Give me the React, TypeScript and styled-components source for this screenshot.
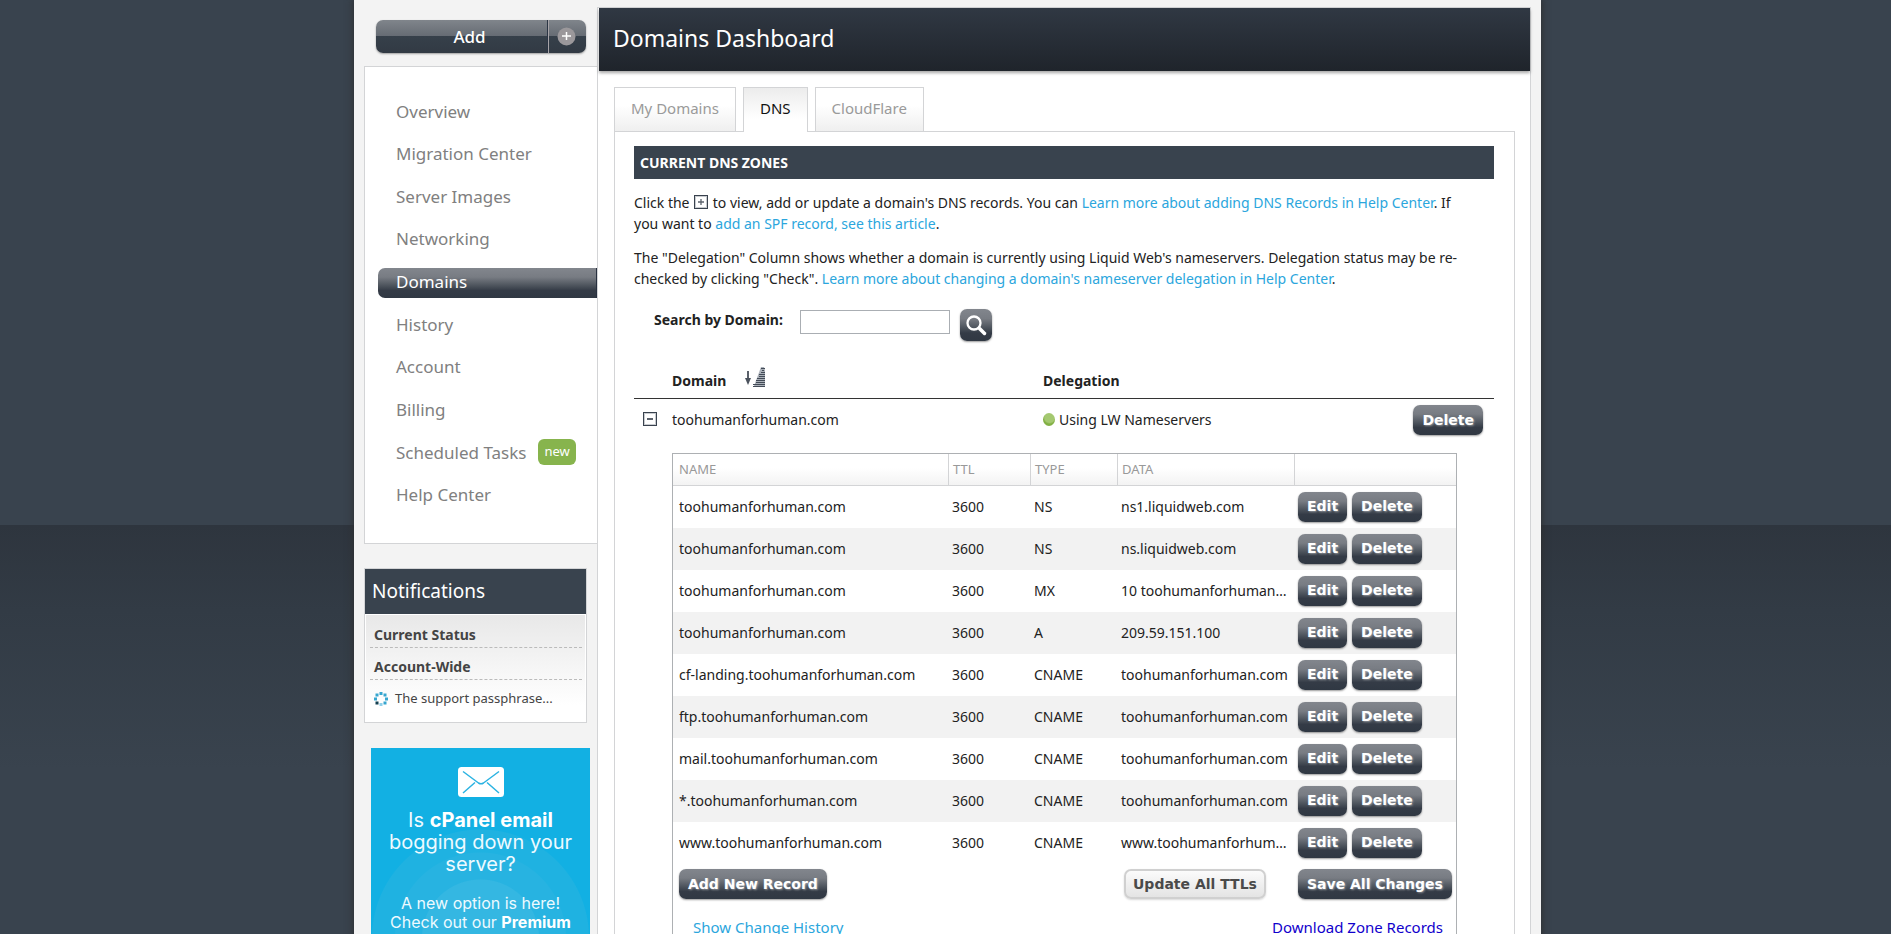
import React from "react";
import styled, { createGlobalStyle, css } from "styled-components";

const slate = "#39434e";
const line = "#d3d4d6";
const steel = "linear-gradient(#82868d 0%, #787c83 30%, #4b525b 60%, #343b46 75%, #303843 100%)";

const GlobalStyle = createGlobalStyle`
  *, *::before, *::after { box-sizing: border-box; }
  html { scrollbar-width: none; }
  body {
    margin: 0;
    padding-left: 4px;
    background: linear-gradient(#2e353e, #323b45 35%, ${slate}) 0 525px / 100% 245px no-repeat ${slate};
    font: 14px/21px "Noto Sans", "Open Sans", sans-serif;
    color: #222;
  }
  a { color: #2ba6dd; text-decoration: none; }
  button { cursor: pointer; }
`;

const Shell = styled.div`
  display: flex;
  align-items: stretch;
  max-width: 1187px;
  min-height: 100vh;
  margin: 0 auto;
  padding-right: 10px;
  background: #f3f3f3;
  box-shadow: 0 0 7px 1px rgba(45, 45, 45, 0.9);
`;

const Sidebar = styled.aside`
  flex: none;
  width: 243px;
  padding: 20px 0 0 10px;
`;

const AddGroup = styled.div`
  display: flex;
  height: 33px;
  margin: 0 11px 13px 12px;
  border-radius: 7px;
  overflow: hidden;
  box-shadow: 0 1px 2px rgba(0, 0, 0, 0.35);
`;

const AddButton = styled.button<{ $icon?: boolean }>`
  display: flex;
  align-items: center;
  justify-content: center;
  border: 0;
  padding: 0 0 1px;
  color: #fff;
  font: 500 17px/21px "Noto Sans", sans-serif;
  background: linear-gradient(#80858b 0, #666c74 48%, #36404a 49%, #323a44 100%);
  ${(p) =>
    p.$icon
      ? css`
          width: 38px;
          padding-right: 3px;
          border-left: 1px solid #a7a4a8;
        `
      : css`
          flex: 1;
          padding-left: 16px;
          border-right: 1px solid #2b3544;
        `}
`;

const Nav = styled.nav`
  padding: 30px 0 32px 13px;
  background: #fff;
  border: 1px solid ${line};
  border-right: 0;
`;

const NavList = styled.ul`
  display: flex;
  flex-direction: column;
  justify-content: space-between;
  min-height: 414px;
  margin: 0;
  padding: 0;
  list-style: none;
`;

const NavLink = styled.a<{ $active?: boolean }>`
  display: flex;
  align-items: center;
  gap: 12px;
  height: 30px;
  padding: 0 0 2px 18px;
  font-size: 17px;
  color: #808080;
  border-radius: 7px 0 0 7px;
  ${(p) =>
    p.$active &&
    css`
      color: #fff;
      background: ${steel};
      border-right: 1px solid #27303f;
    `}
`;

const NewBadge = styled.span`
  padding: 2px 6px 3px;
  border-radius: 6px;
  background: #87b44d;
  color: #fff;
  font-size: 13px;
`;

const Notifications = styled.section`
  margin: 24px 10px 25px 0;
  background: #fff;
  border: 1px solid ${line};
`;

const NotifTitle = styled.h2`
  margin: 0;
  padding: 12px 7px;
  background: ${slate};
  color: #fff;
  font-size: 19px;
  font-weight: 400;
  line-height: 21px;
`;

const NotifBody = styled.div`
  margin: 1px;
  padding: 9px 3px 12px 4px;
  background: linear-gradient(#e8e8e8, #fff 85%);
`;

const NotifHead = styled.h3`
  margin: 0 0 8px;
  padding: 0 4px 2px;
  border-bottom: 1px dashed #bbb;
  color: #444;
  font-size: 14px;
  line-height: 21px;
`;

const NotifItem = styled.div`
  display: flex;
  align-items: center;
  gap: 7px;
  padding: 0 4px;
  font-size: 13px;
  color: #444;
`;

const Banner = styled.a`
  display: block;
  margin: 0 7px;
  padding: 19px 10px 10px;
  text-align: center;
  color: #eefaff;
  font-family: Inter, "Noto Sans", sans-serif;
  background: radial-gradient(circle at 50% 190px, #34b7e2 0 58px, #27b3e1 59px 85px, #1fb2e1 86px 108px, #12b0e3 109px);
  svg { display: block; margin: 0 auto 12px; }
  b { color: #fff; }
`;

const BannerLead = styled.p`
  margin: 0 0 19px;
  font-size: 20px;
  line-height: 22px;
`;

const BannerText = styled.p`
  margin: 0;
  font-size: 16px;
  line-height: 19px;
`;

const Main = styled.main`
  flex: 1;
  min-width: 0;
  margin-top: 7px;
  background: #fff;
  border: 1px solid ${line};
  border-bottom: 0;
`;

const PageHeader = styled.header`
  margin-left: 1px;
  padding: 16px 14px 19px;
  background: linear-gradient(#303843, #1f242b);
  box-shadow: 0 2px 3px rgba(0, 0, 0, 0.35);
  h1 {
    margin: 0;
    color: #fff;
    font-size: 23px;
    font-weight: 400;
    line-height: 28px;
  }
`;

const Tabs = styled.div`
  display: flex;
  gap: 7px;
  margin: 16px 16px 0;
`;

const Tab = styled.a<{ $active?: boolean }>`
  height: 44px;
  padding: 10px 16px;
  border: 1px solid ${line};
  border-bottom: 0;
  font-size: 15px;
  color: ${(p) => (p.$active ? "#111" : "#9a9a9a")};
  background: ${(p) => (p.$active ? "linear-gradient(#ececec, #fff 70%)" : "linear-gradient(#fff 40%, #efefef)")};
  ${(p) =>
    p.$active &&
    css`
      height: 45px;
      margin-bottom: -1px;
      z-index: 1;
    `}
`;

const Panel = styled.section`
  margin: 0 15px 0 16px;
  padding: 14px 20px 0 19px;
  border: 1px solid ${line};
  border-bottom: 0;
`;

const SectionTitle = styled.h2`
  margin: 0 0 13px;
  padding: 6px;
  background: ${slate};
  color: #fff;
  font-size: 14px;
  line-height: 21px;
`;

const Copy = styled.p`
  margin: 0 0 13px;
  padding-right: 20px;
  svg { margin: 0 1px; vertical-align: -1px; }
`;

const SearchForm = styled.form`
  display: flex;
  align-items: flex-start;
  margin-top: 20px;
  padding-left: 20px;
  label {
    width: 146px;
    font-weight: 700;
  }
  input {
    width: 150px;
    height: 24px;
    margin: 1px 10px 0 0;
    border: 1px solid #aaaeb3;
    padding: 0 4px;
    font: inherit;
  }
`;

const SearchButton = styled.button`
  display: flex;
  align-items: center;
  justify-content: center;
  width: 32px;
  height: 32px;
  padding: 0;
  border: 0;
  border-radius: 7px;
  background: ${steel};
  box-shadow: 0 1px 2px rgba(0, 0, 0, 0.4);
`;

const ZoneTable = styled.table`
  width: 100%;
  table-layout: fixed;
  border-spacing: 0;
  text-align: left;
`;

const ZoneHead = styled.th`
  height: 58px;
  padding: 0 0 7px;
  vertical-align: bottom;
  border-bottom: 1px solid #333;
  svg { margin-left: 19px; vertical-align: -1px; }
`;

const ZoneCell = styled.td<{ $end?: boolean }>`
  height: 54px;
  padding: ${(p) => (p.$end ? "6px 11px 0 0" : "10px 0 0")};
  vertical-align: top;
  text-align: ${(p) => (p.$end ? "right" : "left")};
`;

const Toggle = styled.button`
  display: block;
  margin: 3px 0 0 9px;
  padding: 0;
  border: 0;
  background: none;
  svg { display: block; }
`;

const StatusDot = styled.span`
  display: inline-block;
  width: 12px;
  height: 13px;
  margin-right: 4px;
  vertical-align: -1px;
  border-radius: 50%;
  background: radial-gradient(circle at 55% 35%, #a4c870 0 45%, #82b044 60%);
`;

const RecordsCell = styled.td`
  padding: 0 37px 0 38px;
`;

const Records = styled.table`
  width: 100%;
  table-layout: fixed;
  border-spacing: 0;
  border: 1px solid #adb0b3;
  border-bottom: 0;
`;

const RecordHead = styled.th`
  height: 32px;
  padding: 0 4px;
  border-bottom: 1px solid ${line};
  background: linear-gradient(#fff 45%, #f3f3f3);
  color: #999;
  font-size: 13px;
  font-weight: 400;
  text-align: left;
  &:first-child { padding-left: 6px; }
  & + & { border-left: 1px solid ${line}; }
`;

const RecordRow = styled.tr`
  &:nth-child(even) { background: #f2f2f2; }
`;

const RecordCell = styled.td`
  height: 42px;
  padding: 0 4px 2px;
  overflow: hidden;
  white-space: nowrap;
  text-overflow: ellipsis;
  &:first-child { padding-left: 6px; }
`;

const ButtonRow = styled.div`
  display: flex;
  gap: 5px;
  padding-top: 1px;
`;

const ActionButton = styled.button<{ $light?: boolean }>`
  height: 30px;
  padding: 0 9px;
  border: 0;
  border-radius: 7px;
  font: 700 14px/21px "DejaVu Sans", sans-serif;
  color: #fff;
  text-shadow: 1px 1px 2px rgba(255, 255, 255, 0.4);
  background: ${steel};
  box-shadow: 0 1px 2px rgba(0, 0, 0, 0.4);
  white-space: nowrap;
  ${(p) =>
    p.$light &&
    css`
      margin-left: 3px;
      padding: 0 7px;
      border: 2px solid #d0d0d0;
      color: #4a4a4a;
      text-shadow: none;
      background: linear-gradient(#fbfbfb, #e4e4e4);
      box-shadow: 0 1px 2px rgba(0, 0, 0, 0.15);
    `}
`;

const FooterCell = styled.td<{ $end?: boolean }>`
  padding: ${(p) => (p.$end ? "11px 13px 9px 0" : "11px 20px 9px")};
  text-align: ${(p) => (p.$end ? "right" : "left")};
`;

const HistoryLink = styled.a`
  font-size: 15px;
`;

const DownloadLink = styled.a`
  && { color: #1100cc; }
  font-size: 15px;
`;

const BoxIcon = ({ plus }: { plus?: boolean }) => (
  <svg width="14" height="14" viewBox="0 0 14 14" aria-hidden="true">
    <rect x="0.5" y="0.5" width="13" height="13" fill="#fff" stroke="#39424e" />
    <rect x="1.5" y="1.5" width="11" height="11" fill="none" stroke="#c9ccd0" />
    <path d={plus ? "M4 7h6M7 4v6" : "M4 7h6"} stroke="#5b626c" strokeWidth={plus ? 1.3 : 2} />
  </svg>
);

const SortIcon = () => (
  <svg width="21" height="20" viewBox="0 0 21 20" aria-hidden="true">
    <path d="M3 4v9" stroke="#5b616b" strokeWidth="2" />
    <path d="M0 11h6L3 18z" fill="#4b525d" />
    <path d="M16 0h3l1 3v16H9z" fill="#aab0b8" />
    <path
      d="M16 1.500h4M17 3.500h2M16 5.500h4M14 7.500h6M14 9.500h6M12 11.500h8M11 13.500h9M11 15.500h9M8 17.500h12M8 19.500h12"
      stroke="#434b57"
      strokeWidth="1"
    />
  </svg>
);

const SpinnerIcon = () => (
  <svg width="14" height="14" viewBox="0 0 14 14" fill="#37a6cf" aria-hidden="true">
    <rect x="5.500" y="0" width="3" height="3" />
    <rect x="1.500" y="1.500" width="3" height="3" />
    <rect x="9.500" y="1.500" width="3" height="3" />
    <rect x="0" y="5.500" width="3" height="3" />
    <rect x="11" y="5.500" width="3" height="3" />
    <rect x="1.500" y="9.500" width="3" height="3" fill="#123f50" />
    <rect x="9.500" y="9.500" width="3" height="3" />
    <rect x="5.500" y="11" width="3" height="3" fill="#8fd0ea" />
  </svg>
);

const MailIcon = () => (
  <svg width="46" height="30" viewBox="0 0 46 30" fill="none" aria-hidden="true">
    <rect width="46" height="30" rx="3.500" fill="#fff" />
    <path d="M5 4.500 20.500 16q2.500 1.600 5 0L41 4.500M5 26l12-10.500M41 26 29 15.500" stroke="#2bb3e2" strokeWidth="1.500" />
  </svg>
);

const SearchIcon = () => (
  <svg width="21" height="21" viewBox="0 0 21 21" fill="none" stroke="#fff" strokeLinecap="round" aria-hidden="true">
    <circle cx="8" cy="8" r="6.500" strokeWidth="2.300" />
    <path d="M13.500 13.500l5 5" strokeWidth="3.500" />
  </svg>
);

const AddIcon = () => (
  <svg width="19" height="19" viewBox="0 0 19 19" aria-hidden="true">
    <circle cx="9.500" cy="9.500" r="9" fill="#9b989b" />
    <path d="M5 9h9M9.500 5v8" stroke="#fff" strokeWidth="1.500" />
  </svg>
);

const NAV = [
  "Overview",
  "Migration Center",
  "Server Images",
  "Networking",
  "Domains",
  "History",
  "Account",
  "Billing",
  "Scheduled Tasks",
  "Help Center",
];

const TABS = ["My Domains", "DNS", "CloudFlare"];

const RECORDS = [
  ["toohumanforhuman.com", "NS", "ns1.liquidweb.com"],
  ["toohumanforhuman.com", "NS", "ns.liquidweb.com"],
  ["toohumanforhuman.com", "MX", "10 toohumanforhuman.com"],
  ["toohumanforhuman.com", "A", "209.59.151.100"],
  ["cf-landing.toohumanforhuman.com", "CNAME", "toohumanforhuman.com"],
  ["ftp.toohumanforhuman.com", "CNAME", "toohumanforhuman.com"],
  ["mail.toohumanforhuman.com", "CNAME", "toohumanforhuman.com"],
  ["*.toohumanforhuman.com", "CNAME", "toohumanforhuman.com"],
  ["www.toohumanforhuman.com", "CNAME", "www.toohumanforhuman.com"],
];

export default function App() {
  return (
    <>
      <GlobalStyle />
      <Shell>
        <Sidebar>
          <AddGroup>
            <AddButton type="button">Add</AddButton>
            <AddButton type="button" $icon aria-label="More options">
              <AddIcon />
            </AddButton>
          </AddGroup>
          <Nav>
            <NavList>
              {NAV.map((item) => (
                <li key={item}>
                  <NavLink href="#" $active={item === "Domains"}>
                    {item}
                    {item === "Scheduled Tasks" && <NewBadge>new</NewBadge>}
                  </NavLink>
                </li>
              ))}
            </NavList>
          </Nav>
          <Notifications>
            <NotifTitle>Notifications</NotifTitle>
            <NotifBody>
              <NotifHead>Current Status</NotifHead>
              <NotifHead>Account-Wide</NotifHead>
              <NotifItem>
                <SpinnerIcon />
                The support passphrase...
              </NotifItem>
            </NotifBody>
          </Notifications>
          <Banner href="#">
            <MailIcon />
            <BannerLead>
              Is <b>cPanel email</b> bogging down your server?
            </BannerLead>
            <BannerText>
              A new option is here! Check out our <b>Premium</b>
            </BannerText>
          </Banner>
        </Sidebar>
        <Main>
          <PageHeader>
            <h1>Domains Dashboard</h1>
          </PageHeader>
          <Tabs>
            {TABS.map((tab) => (
              <Tab key={tab} href="#" $active={tab === "DNS"}>
                {tab}
              </Tab>
            ))}
          </Tabs>
          <Panel>
            <SectionTitle>CURRENT DNS ZONES</SectionTitle>
            <Copy>
              Click the <BoxIcon plus /> to view, add or update a domain's DNS records. You can{" "}
              <a href="#">Learn more about adding DNS Records in Help Center</a>. If you want to{" "}
              <a href="#">add an SPF record, see this article</a>.
            </Copy>
            <Copy>
              The "Delegation" Column shows whether a domain is currently using Liquid Web's nameservers. Delegation
              status may be re-checked by clicking "Check".{" "}
              <a href="#">Learn more about changing a domain's nameserver delegation in Help Center</a>.
            </Copy>
            <SearchForm>
              <label htmlFor="domain-search">Search by Domain:</label>
              <input id="domain-search" type="text" />
              <SearchButton type="button" aria-label="Search">
                <SearchIcon />
              </SearchButton>
            </SearchForm>
            <ZoneTable>
              <colgroup>
                <col width="38" />
                <col width="371" />
                <col />
                <col width="120" />
              </colgroup>
              <thead>
                <tr>
                  <ZoneHead />
                  <ZoneHead>
                    Domain
                    <SortIcon />
                  </ZoneHead>
                  <ZoneHead>Delegation</ZoneHead>
                  <ZoneHead />
                </tr>
              </thead>
              <tbody>
                <tr>
                  <ZoneCell>
                    <Toggle type="button" aria-label="Collapse records">
                      <BoxIcon />
                    </Toggle>
                  </ZoneCell>
                  <ZoneCell>toohumanforhuman.com</ZoneCell>
                  <ZoneCell>
                    <StatusDot />
                    Using LW Nameservers
                  </ZoneCell>
                  <ZoneCell $end>
                    <ActionButton type="button">Delete</ActionButton>
                  </ZoneCell>
                </tr>
                <tr>
                  <RecordsCell colSpan={4}>
                    <Records>
                      <colgroup>
                        <col width="275" />
                        <col width="82" />
                        <col width="87" />
                        <col width="177" />
                        <col />
                      </colgroup>
                      <thead>
                        <tr>
                          <RecordHead>NAME</RecordHead>
                          <RecordHead>TTL</RecordHead>
                          <RecordHead>TYPE</RecordHead>
                          <RecordHead>DATA</RecordHead>
                          <RecordHead />
                        </tr>
                      </thead>
                      <tbody>
                        {RECORDS.map(([name, type, data], i) => (
                          <RecordRow key={i}>
                            <RecordCell>{name}</RecordCell>
                            <RecordCell>3600</RecordCell>
                            <RecordCell>{type}</RecordCell>
                            <RecordCell>{data}</RecordCell>
                            <RecordCell>
                              <ButtonRow>
                                <ActionButton type="button">Edit</ActionButton>
                                <ActionButton type="button">Delete</ActionButton>
                              </ButtonRow>
                            </RecordCell>
                          </RecordRow>
                        ))}
                      </tbody>
                      <tfoot>
                        <tr>
                          <RecordCell colSpan={3}>
                            <ActionButton type="button">Add New Record</ActionButton>
                          </RecordCell>
                          <RecordCell>
                            <ActionButton type="button" $light>
                              Update All TTLs
                            </ActionButton>
                          </RecordCell>
                          <RecordCell>
                            <ActionButton type="button">Save All Changes</ActionButton>
                          </RecordCell>
                        </tr>
                        <tr>
                          <FooterCell colSpan={3}>
                            <HistoryLink href="#">Show Change History</HistoryLink>
                          </FooterCell>
                          <FooterCell colSpan={2} $end>
                            <DownloadLink href="#">Download Zone Records</DownloadLink>
                          </FooterCell>
                        </tr>
                      </tfoot>
                    </Records>
                  </RecordsCell>
                </tr>
              </tbody>
            </ZoneTable>
          </Panel>
        </Main>
      </Shell>
    </>
  );
}
